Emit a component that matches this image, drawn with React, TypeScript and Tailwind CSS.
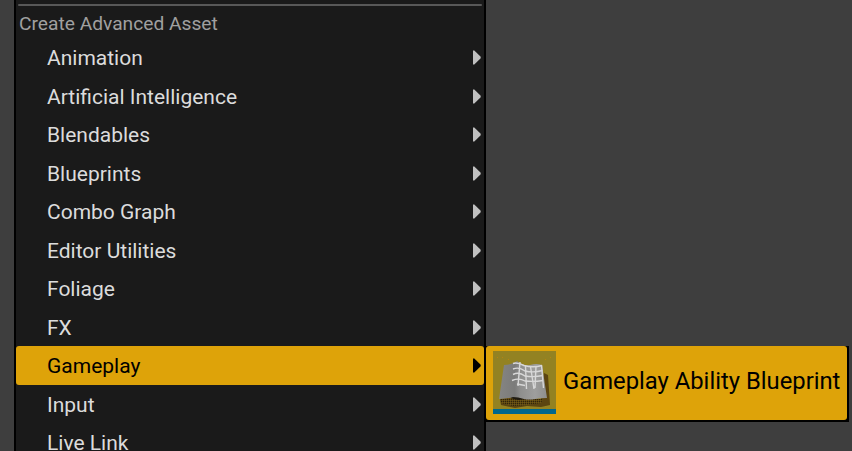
import React from "react";

const items = [
  "Animation",
  "Artificial Intelligence",
  "Blendables",
  "Blueprints",
  "Combo Graph",
  "Editor Utilities",
  "Foliage",
  "FX",
  "Gameplay",
  "Input",
  "Live Link",
];

function Arrow() {
  return (
    <svg width="8" height="15" viewBox="0 0 8 15" className="mb-px block shrink-0" fill="currentColor">
      <path d="M0 0.5H1.3L7.7 6.8V8.2L1.3 14.5H0Z" />
    </svg>
  );
}

function AssetIcon() {
  return (
    <svg width="63" height="63" viewBox="0 0 63 63" className="mb-[2px] shrink-0">
      <defs>
        <linearGradient id="page" x1="0" y1="0" x2="1" y2="0">
          <stop offset="0" stopColor="#858583" />
          <stop offset="0.33" stopColor="#7b7b7a" />
          <stop offset="0.45" stopColor="#8f8f8e" />
          <stop offset="0.75" stopColor="#9e9e9d" />
          <stop offset="1" stopColor="#8e8e8d" />
        </linearGradient>
        <pattern id="grain" width="2" height="2" patternUnits="userSpaceOnUse">
          <rect width="1" height="1" fill="#2f240c" />
          <rect x="1" y="1" width="1" height="1" fill="#6f5815" />
        </pattern>
      </defs>
      <rect width="63" height="63" fill="#938222" />
      <path d="M7 48L20 46L48 48L51 22L55 24L57 54L48 56L34 55L22 57L8 54Z" fill="#5c4510" />
      <path d="M8 48L20 46L50 48L48 52L34 54L20 55L8 52Z" fill="url(#grain)" />
      <path d="M17 47L22 45L33 48L25 49Z" fill="#1f1b12" />
      <path d="M11 14Q19 14 24 10Q30 15 37 14Q44 12 49 14L54 47Q48 47 42 48Q36 49 31 48Q25 46 20 46Q14 48 6 48Z" fill="url(#page)" />
      <g fill="none" stroke="#d8d8d8" strokeWidth="1.4">
        <path d="M20 12.500Q24 11 31 14.500Q40 17 49 14.500M20 18Q26 15.500 32 20Q41 22 49.500 19.500M20 23.500Q26 20.500 32 25Q41 26.500 50 24.500M19 29.500Q26 26.500 32 30Q41 31 50 29.500M24 33L32 34.500" />
        <path d="M27 11L25 35M32.500 15L33.500 38M37.500 15.500L41 38M43 15L42 37M48.500 14L50.500 37" />
      </g>
      <g fill="#b5850e">
        <rect x="4" y="6" width="1" height="1" />
        <rect x="9" y="6" width="1" height="1" />
        <rect x="15" y="8" width="1" height="1" />
        <rect x="52" y="8" width="1" height="1" />
        <rect x="57" y="6" width="1" height="1" />
      </g>
      <rect y="58" width="63" height="5" fill="#00678c" />
    </svg>
  );
}

export default function App() {
  return (
    <div className="flex h-[451px] w-[852px] items-start overflow-hidden bg-[#3e3e3e] pl-3.5 font-[Roboto,sans-serif]">
      <div className="h-[451px] w-[472px] shrink-0 overflow-hidden border-x-2 border-black bg-[#1a1a1a] pt-1">
        <div className="mx-0.5 h-0.5 rounded-full bg-[#585858]" />
        <div className="flex h-8 items-center pl-[3px] pt-[5px] text-[19.2px] text-[#a0a0a0]">
          Create Advanced Asset
        </div>
        {items.map((name) => (
          <div
            key={name}
            className={`flex h-[38.5px] items-center justify-between rounded-[3px] pl-[31px] pr-[3px] pt-[2px] text-[21px] leading-6 ${
              name === "Gameplay" ? "bg-[#dea309] text-black" : "text-[#dcdcdc]"
            }`}
          >
            <span>{name}</span>
            <span className={name === "Gameplay" ? "text-black" : "text-[#c0c0c0]"}>
              <Arrow />
            </span>
          </div>
        ))}
      </div>
      <div className="mt-[346px] w-[363px] shrink-0 border-b-2 border-r-2 border-black bg-black">
        <div className="flex h-[74px] items-center rounded-[3px] bg-[#dea309] pl-[7px]">
          <AssetIcon />
          <span className="whitespace-nowrap pb-0.5 pl-[7px] text-[23.8px] text-black">
            Gameplay Ability Blueprint
          </span>
        </div>
      </div>
    </div>
  );
}
